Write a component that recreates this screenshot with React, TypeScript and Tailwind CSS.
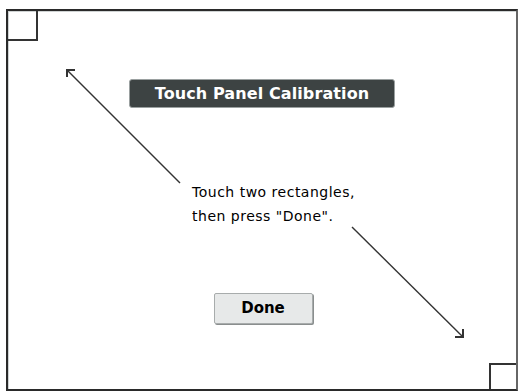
export default function App() {
  return (
    <div className="w-[519px] h-[392px] bg-white pt-[9px] pl-[6px]">
      <div className="relative w-[512px] h-[382px] border-2 border-[#2a2a2a] border-r-[#666] bg-white shadow-[inset_1px_1px_0_#cfd3d3] flex flex-col items-center">
        {/* calibration targets */}
        <div className="absolute left-0 top-0 w-[30px] h-[30px] border-r-2 border-b-2 border-[#333]" />
        <div className="absolute right-0 bottom-0 w-[27px] h-[26px] border-l-2 border-t-2 border-[#333]" />

        <svg className="absolute left-[-8px] top-[-11px] pointer-events-none" width="519" height="392">
          <g stroke="#333" strokeWidth="1.4" fill="none">
            <line x1="67" y1="70" x2="180" y2="183" />
            <polyline points="75,70 67,70 67,77" strokeWidth="2" />
            <line x1="352" y1="227" x2="463" y2="337" />
            <polyline points="455,337 463,337 463,329" strokeWidth="2" />
          </g>
        </svg>

        <div className="mt-[68px] w-[266px] h-[29px] rounded-[3px] bg-[#3d4343] border border-[#9aa0a0] flex items-center justify-center">
          <span className="text-white font-bold text-[16px] tracking-[0.1px] font-['DejaVu_Sans',sans-serif]">
            Touch Panel Calibration
          </span>
        </div>

        <div className="mt-[72px] ml-[23px] text-[14px] leading-[24px] tracking-[0.5px] text-black font-['DejaVu_Sans',sans-serif]">
          <p>Touch two rectangles,</p>
          <p>then press "Done".</p>
        </div>

        <button className="mt-[65px] ml-[2px] w-[99px] h-[31px] bg-[#e7e9e9] border border-[#a8acac] rounded-[2px] shadow-[1px_1px_0_#8a8e8e] text-black font-bold text-[15px] font-['DejaVu_Sans',sans-serif]">
          Done
        </button>
      </div>
    </div>
  );
}
